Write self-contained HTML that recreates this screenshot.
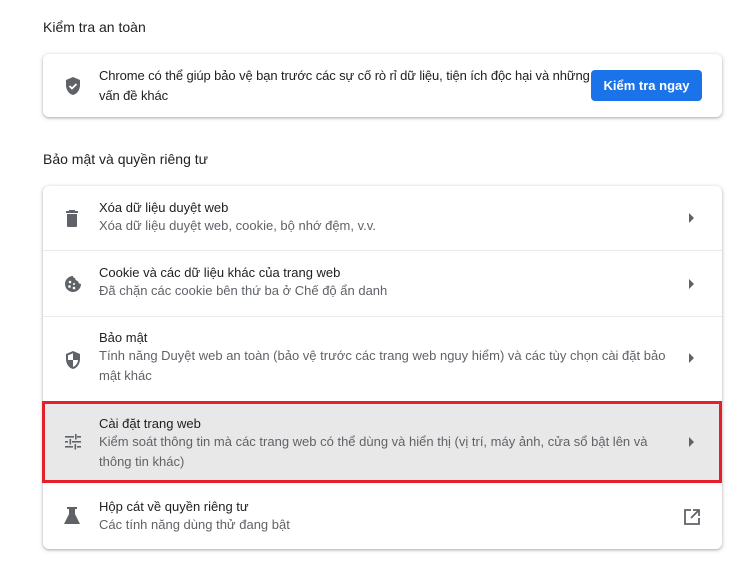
<!DOCTYPE html>
<html><head><meta charset="utf-8"><style>
*{box-sizing:border-box;margin:0;padding:0}
body{width:755px;height:568px;background:#fff;font-family:"Liberation Sans",Arial,sans-serif;color:#202124;position:relative;overflow:hidden}
.h{position:absolute;left:43px;font-size:14px;color:#202124}
.card{position:absolute;left:43px;width:679px;background:#fff;border-radius:6px;box-shadow:0 1px 2px rgba(60,64,67,.3),0 1px 4px 1px rgba(60,64,67,.15)}
.row{position:absolute;left:0;width:679px;border-top:1px solid #e8eaed}
.row:first-child{border-top:none}
.t1{position:absolute;left:56px;font-size:13px;color:#202124}
.t2{position:absolute;left:56px;font-size:13px;color:#5f6368;line-height:20px;width:575px}
.ic{position:absolute;left:21px}
.ar{position:absolute;left:646px;width:0;height:0;border-left:5px solid #5f6368;border-top:5px solid transparent;border-bottom:5px solid transparent}
</style></head><body>
<div class="h" style="top:19px">Kiểm tra an toàn</div>
<div class="card" style="top:54px;height:63px">
 <svg class="ic" style="top:22px" width="18" height="20" viewBox="0 0 18 20"><path d="M9 1L2 4v5c0 5 3 9 7 10 4-1 7-5 7-10V4z" fill="#5f6368"/><path d="M5.5 10l2.5 2.5 4.5-4.5" stroke="#fff" stroke-width="1.8" fill="none"/></svg>
 <div class="t2" style="top:12px;color:#202124;width:492px;letter-spacing:-0.1px">Chrome có thể giúp bảo vệ bạn trước các sự cố rò rỉ dữ liệu, tiện ích độc hại và những vấn đề khác</div>
 <div style="position:absolute;left:548px;top:16px;width:111px;height:31px;background:#1a73e8;border-radius:4px;color:#fff;font-weight:bold;font-size:13px;text-align:center;line-height:31px">Kiểm tra ngay</div>
</div>
<div class="h" style="top:151px">Bảo mật và quyền riêng tư</div>
<div class="card" style="top:186px;height:363px">
 <div class="row" style="top:0;height:64px">
  <svg class="ic" style="top:24px" width="16" height="18" viewBox="0 0 16 18"><rect x="2" y="1" width="12" height="2" fill="#5f6368"/><rect x="5" y="0" width="6" height="2" fill="#5f6368"/><path d="M3 4h10v12a1 1 0 0 1-1 1H4a1 1 0 0 1-1-1z" fill="#5f6368"/></svg>
  <div class="t1" style="top:14px">Xóa dữ liệu duyệt web</div>
  <div class="t2" style="top:30px">Xóa dữ liệu duyệt web, cookie, bộ nhớ đệm, v.v.</div>
  <div class="ar" style="top:27px"></div>
 </div>
 <div class="row" style="top:64px;height:66px">
  <svg class="ic" style="top:24px" width="18" height="18" viewBox="0 0 18 18"><path d="M9 1a8 8 0 1 0 8 8 3 3 0 0 1-3-3 3 3 0 0 1-3-3 2 2 0 0 1-2-2z" fill="#5f6368"/><circle cx="6" cy="7" r="1.3" fill="#fff"/><circle cx="5.5" cy="11.5" r="1.3" fill="#fff"/><circle cx="10" cy="13" r="1.3" fill="#fff"/><circle cx="10" cy="9" r="1" fill="#fff"/></svg>
  <div class="t1" style="top:14px">Cookie và các dữ liệu khác của trang web</div>
  <div class="t2" style="top:30px">Đã chặn các cookie bên thứ ba ở Chế độ ẩn danh</div>
  <div class="ar" style="top:28px"></div>
 </div>
 <div class="row" style="top:130px;height:85px">
  <svg class="ic" style="top:33px" width="18" height="20" viewBox="0 0 18 20"><path d="M9 1L2 4v5c0 5 3 9 7 10 4-1 7-5 7-10V4z" fill="#5f6368"/><path d="M9 3.2L4 5.4V10h5zM9 10v7c2.8-1 4.8-4 5-7z" fill="#fff"/></svg>
  <div class="t1" style="top:13px">Bảo mật</div>
  <div class="t2" style="top:29px">Tính năng Duyệt web an toàn (bảo vệ trước các trang web nguy hiểm) và các tùy chọn cài đặt bảo mật khác</div>
  <div class="ar" style="top:36px"></div>
 </div>
 <div class="row" style="top:215px;height:82px;background:#e8e8e8;border:3px solid #e3202c;left:-1px;width:680px">
  <svg class="ic" style="top:30px;left:20px" width="16" height="16" viewBox="0 0 16 16" fill="#5f6368"><rect x="0" y="2" width="9" height="1.6"/><rect x="12" y="2" width="4" height="1.6"/><rect x="10" y="0" width="1.6" height="5.5"/><rect x="0" y="7" width="3" height="1.6"/><rect x="7" y="7" width="9" height="1.6"/><rect x="4.5" y="5" width="1.6" height="5.5"/><rect x="0" y="12" width="8" height="1.6"/><rect x="12" y="12" width="4" height="1.6"/><rect x="9.5" y="10" width="1.6" height="5.5"/></svg>
  <div class="t1" style="top:12px;left:54px">Cài đặt trang web</div>
  <div class="t2" style="top:28px;left:54px">Kiểm soát thông tin mà các trang web có thể dùng và hiển thị (vị trí, máy ảnh, cửa sổ bật lên và thông tin khác)</div>
  <div class="ar" style="top:33px;left:644px"></div>
 </div>
 <div class="row" style="top:297px;height:66px;border-top:none">
  <svg class="ic" style="top:24px" width="16" height="18" viewBox="0 0 16 18"><rect x="3" y="0" width="10" height="2" fill="#5f6368"/><path d="M5 2h6v5l5 10H0l5-10z" fill="#5f6368"/></svg>
  <div class="t1" style="top:16px">Hộp cát về quyền riêng tư</div>
  <div class="t2" style="top:32px">Các tính năng dùng thử đang bật</div>
  <svg style="position:absolute;left:641px;top:26px" width="16" height="16" viewBox="0 0 16 16"><path d="M7 1H1v14h14V9" stroke="#5f6368" stroke-width="1.8" fill="none"/><path d="M9 1h6v6M15 1L7 9" stroke="#5f6368" stroke-width="1.8" fill="none"/></svg>
 </div>
</div>
</body></html>
